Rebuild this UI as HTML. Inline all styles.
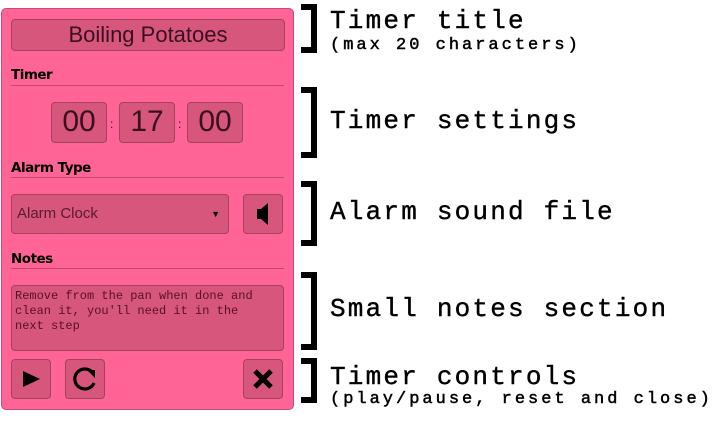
<!DOCTYPE html>
<html><head><style>
*{box-sizing:border-box;margin:0;padding:0}
body{width:717px;height:428px;background:#fff;position:relative;overflow:hidden;font-family:"Liberation Sans",sans-serif}
.a{position:absolute}
.panel{left:1px;top:8px;width:293px;height:402px;background:#ff6496;border:1px solid #c84a75;border-radius:5px}
.f{position:absolute;background:#d6567c;border:1px solid #a8405f;border-radius:4px}
.lbl{position:absolute;left:11px;font-size:13.5px;font-weight:bold;color:#000;font-family:"DejaVu Sans",sans-serif;letter-spacing:-0.5px}
.ln{position:absolute;left:11px;width:273px;height:1px;background:#c54670}
.num{font-size:30px;color:#3a1020;text-align:center;line-height:38px}
.br{position:absolute;left:301px;width:16px;border:6px solid #000;border-left:none}
.t{position:absolute;left:330px;font-family:"Liberation Mono",monospace;font-size:26px;letter-spacing:2.2px;color:#000;white-space:nowrap;line-height:26px;-webkit-text-stroke:0.4px #000}
.s{position:absolute;left:330px;font-family:"Liberation Mono",monospace;font-size:17px;letter-spacing:3px;color:#000;white-space:nowrap;line-height:17px;-webkit-text-stroke:0.5px #000}
</style></head><body>
<div class="a panel"></div>
<div class="f" style="left:11px;top:19px;width:274px;height:32px;font-size:22px;color:#3a1020;text-align:center;line-height:30px">Boiling Potatoes</div>
<div class="lbl" style="top:67px">Timer</div><div class="ln" style="top:85px"></div>
<div class="f num" style="left:51px;top:102px;width:56px;height:41px">00</div>
<div class="a" style="left:110px;top:117px;font-size:12px;color:#3a1020">:</div>
<div class="f num" style="left:119px;top:102px;width:56px;height:41px">17</div>
<div class="a" style="left:178px;top:117px;font-size:12px;color:#3a1020">:</div>
<div class="f num" style="left:187px;top:102px;width:56px;height:41px">00</div>
<div class="lbl" style="top:160px">Alarm Type</div><div class="ln" style="top:177px"></div>
<div class="f" style="left:11px;top:194px;width:218px;height:40px;font-size:15px;color:#5a1a30;line-height:38px;padding-left:5px">Alarm Clock<span style="position:absolute;right:8px;top:0;font-size:9px;color:#000">▼</span></div>
<div class="f" style="left:243px;top:194px;width:40px;height:40px">
<svg width="40" height="40" style="position:absolute;left:-1px;top:-1px"><path d="M14 15h4l7-6v22l-7-6h-4z" fill="#000"/></svg></div>
<div class="lbl" style="top:251px">Notes</div><div class="ln" style="top:268px"></div>
<div class="f" style="left:11px;top:285px;width:273px;height:66px;font-family:'Liberation Mono',monospace;font-size:12px;line-height:15px;color:#5a0f25;padding:3px 10px 3px 3px">Remove from the pan when done and clean it, you'll need it in the next step</div>
<div class="f" style="left:11px;top:359px;width:40px;height:40px"><svg width="40" height="40" style="position:absolute;left:-1px;top:-1px"><path d="M12 12L29 20L12 28z" fill="#000"/></svg></div>
<div class="f" style="left:65px;top:359px;width:40px;height:40px"><svg width="40" height="40" style="position:absolute;left:-1px;top:-1px"><path d="M27 13A10 10 0 1 0 29 24" fill="none" stroke="#000" stroke-width="3.2"/><path d="M22 11h8v8z" fill="#000"/></svg></div>
<div class="f" style="left:243px;top:359px;width:40px;height:40px"><svg width="40" height="40" style="position:absolute;left:-1px;top:-1px"><path d="M12 12L28 28M28 12L12 28" stroke="#000" stroke-width="5"/></svg></div>

<div class="br" style="top:4px;height:49px"></div>
<div class="t" style="top:8px">Timer title</div>
<div class="s" style="top:37px">(max 20 characters)</div>
<div class="br" style="top:87px;height:71px"></div>
<div class="t" style="top:108px">Timer settings</div>
<div class="br" style="top:181px;height:65px"></div>
<div class="t" style="top:199px">Alarm sound file</div>
<div class="br" style="top:272px;height:78px"></div>
<div class="t" style="top:296px">Small notes section</div>
<div class="br" style="top:358px;height:45px"></div>
<div class="t" style="top:364px">Timer controls</div>
<div class="s" style="top:391px">(play/pause, reset and close)</div>
</body></html>
